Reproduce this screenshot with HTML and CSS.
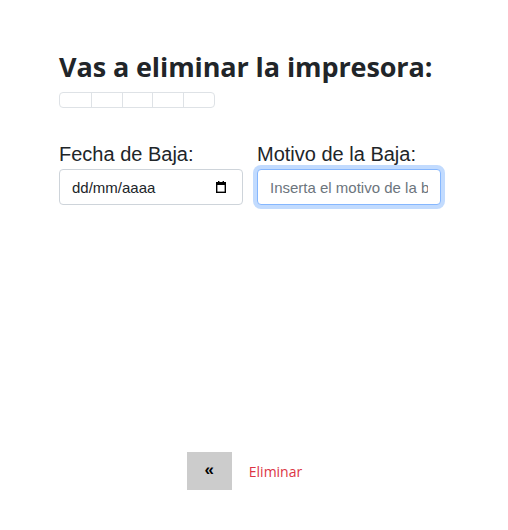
FILE: index.html
```html
<!DOCTYPE html>
<html lang="es">
<head>
<meta charset="utf-8">
<link rel="stylesheet" href="styles.css">
</head>
<body>
<main class="page">
  <h2 class="title">Vas a eliminar la impresora:</h2>
  <table class="info">
    <tr><td></td><td></td><td></td><td></td><td></td></tr>
  </table>
  <div class="fields">
    <div class="field">
      <label class="label" for="fecha">Fecha de Baja:</label>
      <div class="control date-control">
        <input class="date-input" id="fecha" type="text" placeholder="dd/mm/aaaa">
        <svg class="cal" width="12" height="12" viewBox="0 0 12 12" aria-hidden="true">
          <rect x="3" y="0" width="1.4" height="2" fill="#000"/>
          <rect x="7.6" y="0" width="1.4" height="2" fill="#000"/>
          <rect x="1.7" y="1.7" width="8.6" height="9.6" fill="none" stroke="#000" stroke-width="1.4"/>
          <rect x="1" y="1" width="10" height="3" fill="#000"/>
        </svg>
      </div>
    </div>
    <div class="field">
      <label class="label" for="motivo">Motivo de la Baja:</label>
      <input class="control text-control focused" id="motivo" type="text" placeholder="Inserta el motivo de la baja">
    </div>
  </div>
  <div class="actions">
    <button class="back" type="button">«</button>
    <button class="delete" type="button">Eliminar</button>
  </div>
</main>
</body>
</html>
```
FILE: styles.css
```css
* { box-sizing: border-box; }
html, body { margin: 0; background: #fff; }
body { font-family: "Open Sans", "Noto Sans", sans-serif; color: #212529; }
.page {
  padding: 48px 59px 0 59px;
  height: 530px;
  display: flex;
  flex-direction: column;
}
.title {
  margin: 0;
  font-size: 27px;
  font-weight: 700;
  line-height: 38px;
  letter-spacing: -0.1px;
  white-space: nowrap;
}
.info {
  margin-top: 6px;
  border-collapse: separate;
  border-spacing: 0;
  border: 1px solid #dee2e6;
  border-radius: 4px;
  width: 156px;
}
.info td {
  width: 31px;
  height: 14px;
  padding: 0;
  border-left: 1px solid #dee2e6;
}
.info td:first-child { border-left: none; }
.fields {
  display: flex;
  gap: 14px;
  margin-top: 34px;
}
.field { width: 184px; display: flex; flex-direction: column; }
.label {
  font-family: "Liberation Sans", Arial, sans-serif;
  font-size: 20px;
  line-height: 24px;
  margin-bottom: 3px;
  color: #212529;
}
.control {
  width: 184px;
  height: 36px;
  border: 1px solid #ced4da;
  border-radius: 4px;
  background: #fff;
}
.date-control {
  display: flex;
  align-items: center;
  padding: 0 15px 0 12px;
}
.date-input {
  flex: 1;
  min-width: 0;
  border: none;
  outline: none;
  padding: 0;
  font-family: "Liberation Sans", Arial, sans-serif;
  font-size: 15px;
  color: #212529;
  background: transparent;
}
.date-input::placeholder { color: #212529; opacity: 1; }
.cal { flex: none; }
.text-control {
  padding: 6px 12px;
  font-family: "Liberation Sans", Arial, sans-serif;
  font-size: 15px;
  color: #212529;
  outline: none;
}
.text-control::placeholder { color: #6c757d; opacity: 1; }
.focused {
  border-color: #86b7fe;
  box-shadow: 0 0 0 4px rgba(13, 110, 253, 0.25);
}
.actions {
  margin-top: 247px;
  display: flex;
  justify-content: center;
  align-items: center;
  gap: 6px;
  padding-right: 8px;
}
.back {
  width: 45px;
  height: 38px;
  border: none;
  background: #cccccc;
  color: #000;
  font-weight: 700;
  font-size: 17px;
  font-family: "Liberation Sans", Arial, sans-serif;
  padding: 0 0 2px 0;
}
.delete {
  border: none;
  background: transparent;
  color: #dc3545;
  font-family: "Open Sans", "Noto Sans", sans-serif;
  font-size: 14px;
  padding: 6px 11px;
}
```
